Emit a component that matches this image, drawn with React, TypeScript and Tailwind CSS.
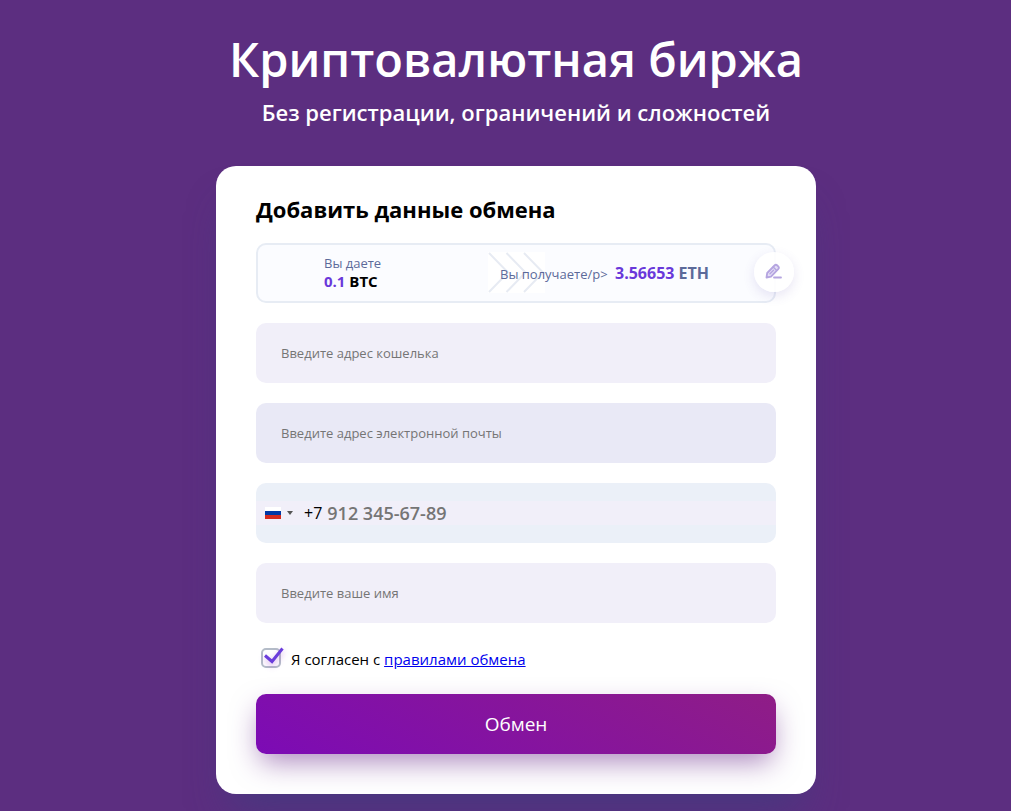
import { useState } from "react";

export default function App() {
  return (
    <main className="min-h-screen bg-[#5c2e80] pt-6 pr-4 pb-[17px] pl-[37px] font-['Open_Sans','Noto_Sans',sans-serif]">
      <header className="text-center font-semibold text-white">
        <h1 className="text-[47px] leading-[70px]">Криптовалютная биржа</h1>
        <p className="text-[22px] leading-9">Без регистрации, ограничений и сложностей</p>
      </header>

      <section className="mx-auto mt-9 max-w-[600px] rounded-[20px] bg-white px-10 pt-[23px] pb-10 shadow-[0_30px_40px_-15px_rgba(60,62,126,0.65)]">
        <h2 className="text-[22px] leading-10 font-bold text-black">Добавить данные обмена</h2>
        <ExchangeSummary />

        <form className="mt-5 flex flex-col gap-5" onSubmit={(e) => e.preventDefault()}>
          <Field id="wallet" type="text" label="Введите адрес кошелька" />
          <Field id="email" type="email" label="Введите адрес электронной почты" active />
          <PhoneField />
          <Field id="name" type="text" label="Введите ваше имя" />
          <Agreement />
          <button
            type="submit"
            className="h-[60px] w-full rounded-[10px] bg-[linear-gradient(30deg,#7c0bb5,#8f1d86)] text-[19px] text-white shadow-[0_12px_28px_-4px_rgba(91,22,128,0.5)]"
          >
            Обмен
          </button>
        </form>
      </section>
    </main>
  );
}

function ExchangeSummary() {
  return (
    <div className="relative mt-[14px] flex h-[60px] items-center rounded-[10px] border-2 border-[#e7ecf4] bg-[#fbfcff] pl-[66px]">
      <div className="w-[176px] pb-[2px] text-[13px] leading-[18px] text-[#5c6a9a]">
        <p>Вы даете</p>
        <p className="text-[15px] font-bold text-black">
          <span className="text-[#6938da]">0.1</span> BTC
        </p>
      </div>
      <div className="relative">
        <Chevrons />
        <p className="relative text-[13px] leading-5 whitespace-nowrap text-[#5c6a9a]">
          Вы получаете/p&gt;{" "}
          <span className="ml-1 text-base leading-5 font-bold">
            <span className="text-[#6938da]">3.56653</span> ETH
          </span>
        </p>
      </div>
      <button
        type="button"
        aria-label="Изменить"
        className="absolute top-[7px] -right-5 flex size-10 items-center justify-center rounded-full bg-white/90 shadow-[0_4px_12px_rgba(90,70,180,0.14)]"
      >
        <PencilIcon />
      </button>
    </div>
  );
}

function Chevrons() {
  return (
    <svg className="absolute -top-[11px] -left-3" width="57" height="41" viewBox="0 0 57 41" fill="none" aria-hidden="true">
      <rect width="57" height="41" fill="#fff" />
      <path d="M1 1l19 19.5L1 40M18.500 1l19 19.500-19 19.500M36 1l19 19.500L36 40" stroke="#e7ebf3" strokeWidth="2" />
    </svg>
  );
}

function PencilIcon() {
  return (
    <svg width="18" height="18" viewBox="0 0 18 18" fill="none" stroke="#b5a5e0" strokeLinecap="round" strokeLinejoin="round" aria-hidden="true">
      <path d="M1.500 14.500l.7-4.500L9.500 2.500a2 2 0 0 1 2.800 0l.9.9a2 2 0 0 1 0 2.800L6 13.600z" fill="#e4def6" strokeWidth="1.800" />
      <path d="M8.200 4l3.500 3.500M5 10.800l3.500-3.500" strokeWidth="1.400" />
      <path d="M9 14.500h7" strokeWidth="1.800" />
    </svg>
  );
}

type FieldProps = { id: string; type: string; label: string; active?: boolean };

function Field({ id, type, label, active }: FieldProps) {
  return (
    <input
      id={id}
      type={type}
      aria-label={label}
      placeholder={label}
      className={`h-[60px] w-full rounded-[10px] px-[25px] text-[13px] text-black outline-none placeholder:text-[#757575] ${
        active ? "bg-[#e9e9f6]" : "bg-[#f1eff9]"
      }`}
    />
  );
}

function PhoneField() {
  return (
    <div className="flex h-[60px] items-center rounded-[10px] bg-[#ebf0f8]">
      <div className="flex h-6 w-full items-center bg-[#f1eff9]">
        <button type="button" aria-label="Россия" className="ml-[9px] flex items-center gap-[6px]">
          <svg width="16" height="12" viewBox="0 0 16 12" aria-hidden="true">
            <path d="M0 0h16v4H0z" fill="#fff" />
            <path d="M0 4h16v4H0z" fill="#0039a6" />
            <path d="M0 8h16v4H0z" fill="#d52b1e" />
          </svg>
          <svg width="6" height="4" viewBox="0 0 6 4" aria-hidden="true">
            <path d="M0 0h6L3 4z" fill="#555" />
          </svg>
        </button>
        <label htmlFor="phone" className="ml-[11px] text-base text-black">+7</label>
        <input
          id="phone"
          type="tel"
          placeholder="912 345-67-89"
          className="ml-[5px] min-w-0 flex-1 text-lg leading-6 font-semibold text-black outline-none placeholder:text-[#757575]"
        />
      </div>
    </div>
  );
}

function Agreement() {
  const [agreed, setAgreed] = useState(true);

  return (
    <div className="flex h-[31px] items-center gap-[7px] pl-[5px]">
      <div className="relative size-[23px]">
        <input
          id="agree"
          type="checkbox"
          checked={agreed}
          onChange={(e) => setAgreed(e.target.checked)}
          className="mt-px block size-5 appearance-none rounded-[5px] border-2 border-[#b4bcc8] bg-white"
        />
        {agreed && (
          <svg className="pointer-events-none absolute top-0 left-0 drop-shadow-[0_3px_3px_rgba(150,40,200,0.4)]" width="23" height="23" viewBox="0 0 23 23" fill="none" aria-hidden="true">
            <path d="M4 8.500l7 6L21.500 1.500" stroke="#6a3ddb" strokeWidth="3" />
          </svg>
        )}
      </div>
      <p className="text-[15px] leading-[26px] text-black">
        <label htmlFor="agree">Я согласен с</label>{" "}
        <a href="#rules" className="text-[#0000ee] underline">правилами обмена</a>
      </p>
    </div>
  );
}
